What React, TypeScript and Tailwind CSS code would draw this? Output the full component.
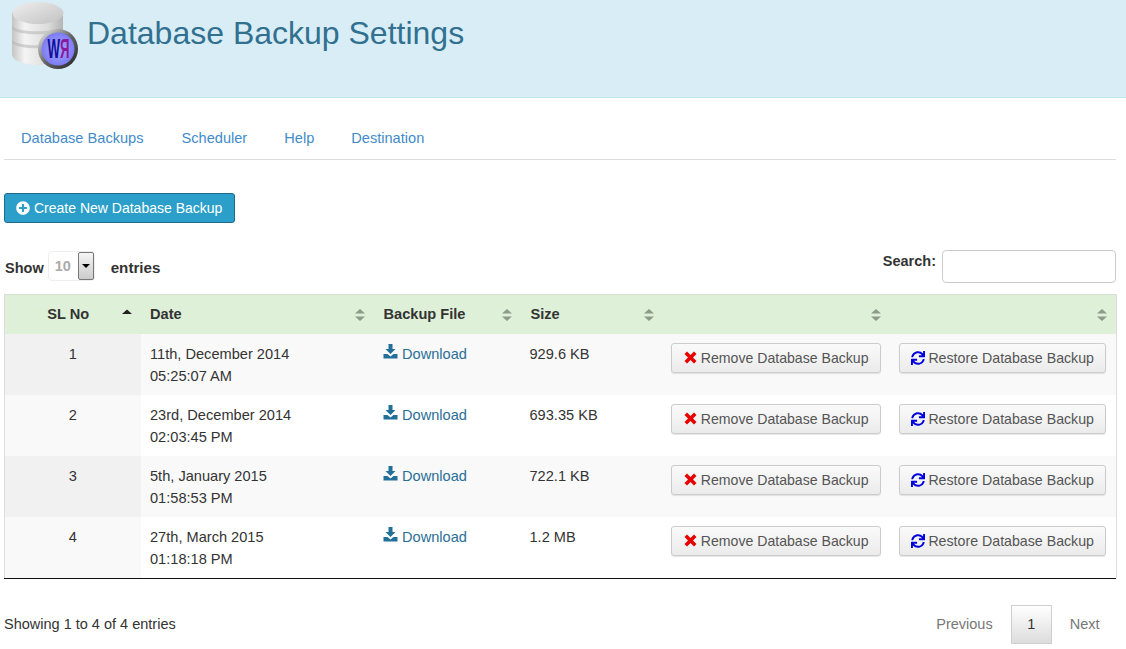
import { FaPlusCircle, FaSync } from "react-icons/fa";

const rows = [
  { no: 1, date: "11th, December 2014", time: "05:25:07 AM", size: "929.6 KB" },
  { no: 2, date: "23rd, December 2014", time: "02:03:45 PM", size: "693.35 KB" },
  { no: 3, date: "5th, January 2015", time: "01:58:53 PM", size: "722.1 KB" },
  { no: 4, date: "27th, March 2015", time: "01:18:18 PM", size: "1.2 MB" },
];

const SortIcon = ({ active }: { active?: boolean }) =>
  active ? (
    <svg width="12" height="12" viewBox="0 0 12 12" className="absolute right-[8px] top-[12px]">
      <path d="M1 7 L6 2.5 L11 7 Z" fill="#222" />
    </svg>
  ) : (
    <svg width="12" height="14" viewBox="0 0 12 14" className="absolute right-[8px] top-[13px]">
      <path d="M1 5.5 L6 1 L11 5.5 Z M1 8.5 L6 13 L11 8.5 Z" fill="#8c9a88" />
    </svg>
  );

const DownloadIcon = () => (
  <svg width="15" height="15" viewBox="0 0 15 15" className="absolute left-0 top-[1px]">
    <path d="M5.5 0 H9.5 V5 H12.5 L7.5 10 L2.5 5 H5.5 Z" fill="#22709a" />
    <path d="M0.5 10 H4.5 L7.5 12.5 L10.5 10 H14.5 V14.5 H0.5 Z" fill="#22709a" />
  </svg>
);

const CrossIcon = () => (
  <svg width="13" height="13" viewBox="0 0 13 13" className="shrink-0">
    <path d="M3 0.5 L6.5 4 L10 0.5 L12.5 3 L9 6.5 L12.5 10 L10 12.5 L6.5 9 L3 12.5 L0.5 10 L4 6.5 L0.5 3 Z" fill="#e80000" />
  </svg>
);

const Logo = () => (
  <svg width="80" height="72" viewBox="0 0 80 72" className="shrink-0">
    <defs>
      <linearGradient id="can" x1="0" x2="1" y1="0" y2="0">
        <stop offset="0" stopColor="#c4c4c4" />
        <stop offset="0.25" stopColor="#f4f4f4" />
        <stop offset="0.7" stopColor="#dcdcdc" />
        <stop offset="1" stopColor="#b5b5b5" />
      </linearGradient>
      <linearGradient id="lid" x1="0" x2="1" y1="0" y2="1">
        <stop offset="0" stopColor="#eeeeee" />
        <stop offset="1" stopColor="#c2c2c2" />
      </linearGradient>
      <linearGradient id="ring" x1="0" x2="1" y1="0" y2="1">
        <stop offset="0" stopColor="#f4f4f4" />
        <stop offset="0.5" stopColor="#666" />
        <stop offset="1" stopColor="#222" />
      </linearGradient>
      <radialGradient id="disc">
        <stop offset="0" stopColor="#a8a8ff" />
        <stop offset="1" stopColor="#7c7cf4" />
      </radialGradient>
    </defs>
    <path d="M12 12 V54 C12 61 25 65 38 65 C51 65 63 61 63 54 V12 Z" fill="url(#can)" />
    <path d="M12 26 C17 33 58 33 63 26 V29 C58 36 17 36 12 29 Z" fill="#b4b4b4" opacity="0.55" />
    <path d="M12 40 C17 47 58 47 63 40 V43 C58 50 17 50 12 43 Z" fill="#b4b4b4" opacity="0.55" />
    <ellipse cx="38" cy="13" rx="25.5" ry="11" fill="url(#lid)" />
    <circle cx="58" cy="49" r="20" fill="url(#ring)" />
    <circle cx="58" cy="49" r="16.5" fill="url(#disc)" />
    <text x="47.5" y="57.5" fontSize="27" fontWeight="700" fontFamily="'Liberation Sans', sans-serif" textLength="22" lengthAdjust="spacingAndGlyphs">
      <tspan fill="#10109a">W</tspan>
      <tspan fill="#8a1a9a">Я</tspan>
    </text>
  </svg>
);

const ActionButton = ({ icon, label, className }: { icon: React.ReactNode; label: string; className: string }) => (
  <button className={`h-[30px] inline-flex items-center pr-[11px] bg-gradient-to-b from-[#fafafa] to-[#ebebeb] border border-[#cccccc] rounded-[3px] text-[#555] whitespace-nowrap shadow-[0_1px_1px_rgba(0,0,0,0.1)] ${className}`}>
    {icon}
    {label}
  </button>
);

export default function App() {
  return (
    <div className="min-h-[649px] bg-white text-[#333] text-[14.6px] leading-[22px] font-['Liberation_Sans',Arial,sans-serif] overflow-hidden">
      <header className="h-[98px] bg-[#d9edf7] border-b border-[#bce8f1] flex items-start">
        <Logo />
        <h1 className="mt-[14px] ml-[7px] text-[#31708f] text-[32px] leading-[38px] font-normal">Database Backup Settings</h1>
      </header>

      <main className="px-1">
        <nav className="w-[1112px] h-[62px] flex items-center gap-[37px] pl-[17px] pt-[18px] border-b border-[#dddddd] text-[#428bca]">
          <a className="mr-px">Database Backups</a>
          <a>Scheduler</a>
          <a>Help</a>
          <a>Destination</a>
        </nav>

        <button className="mt-[33px] h-[30px] w-[231px] flex items-center gap-[4px] pl-[11px] bg-[#2b9fca] border border-[#1b6d8c] rounded-[3px] text-white text-[14px] whitespace-nowrap">
          <FaPlusCircle size={14} />
          Create New Database Backup
        </button>

        <div className="mt-[27px] h-[44px] w-[1112px] flex justify-between items-start">
          <div className="flex items-center h-[36px] font-bold text-[14.5px] pl-px">
            <span>Show</span>
            <div className="ml-1 self-start mt-px w-[47px] h-[30px] border border-[#eeeeee] rounded-[4px] flex items-center pl-[6px] relative text-[#aaa]">
              10
              <span className="absolute right-0 top-0 w-[16px] h-[28px] bg-gradient-to-b from-[#f5f5f5] to-[#cccccc] border border-[#777] rounded-[2px] flex items-center justify-center">
                <span className="w-0 h-0 border-x-[4px] border-x-transparent border-t-[4px] border-t-black" />
              </span>
            </div>
            <span className="ml-4 text-[15.2px]">entries</span>
          </div>
          <div className="flex items-start font-bold text-[14.5px]">
            <span>Search:</span>
            <input className="ml-[6px] w-[174px] h-[33px] border border-[#cccccc] rounded-[4px] bg-white" />
          </div>
        </div>

        <table className="w-[1112px] table-fixed border-collapse border-x border-[#dddddd] border-b-0">
          <colgroup>
            <col className="w-[136px]" />
            <col className="w-[233px]" />
            <col className="w-[147px]" />
            <col className="w-[142px]" />
            <col className="w-[227px]" />
            <col className="w-[227px]" />
          </colgroup>
          <thead>
            <tr className="h-[39px] bg-[#dff0d8] border-t border-[#d6e0d0] font-bold text-left">
              <th className="relative text-center pr-[9px]">SL No<SortIcon active /></th>
              <th className="relative pl-[9.5px]">Date<SortIcon /></th>
              <th className="relative pl-[10px]">Backup File<SortIcon /></th>
              <th className="relative pl-[10px]">Size<SortIcon /></th>
              <th className="relative"><SortIcon /></th>
              <th className="relative"><SortIcon /></th>
            </tr>
          </thead>
          <tbody>
            {rows.map((r, i) => (
              <tr key={r.no} className={`h-[61px] ${i % 2 === 0 ? "bg-[#f9f9f9]" : "bg-white"}`}>
                <td className={`align-top text-center pt-[9px] ${i % 2 === 0 ? "bg-[#f1f1f1]" : "bg-[#f9f9f9]"}`}>{r.no}</td>
                <td className="align-top pt-[9px] pl-[9.5px]">
                  <div>{r.date}</div>
                  <div>{r.time}</div>
                </td>
                <td className="align-top pt-[9px] pl-[9px]">
                  <a className="relative inline-block pl-[19.5px] text-[#2a6f97]">
                    <DownloadIcon />
                    Download
                  </a>
                </td>
                <td className="align-top pt-[9px] pl-[9px]">{r.size}</td>
                <td className="align-top pt-[9px] text-right pr-[9px]">
                  <ActionButton className="pl-3 gap-[4px] text-[14.1px]" icon={<CrossIcon />} label="Remove Database Backup" />
                </td>
                <td className="align-top pt-[9px] text-right pr-[10px]">
                  <ActionButton className="pl-[11px] gap-[3px] text-[14.2px]" icon={<FaSync size={14} color="#0000dd" />} label="Restore Database Backup" />
                </td>
              </tr>
            ))}
          </tbody>
        </table>
        <div className="w-[1112px] h-px bg-[#111]" />

        <div className="mt-[26px] w-[1112px] flex justify-between items-start text-[14.5px]">
          <div className="mt-[8px]">Showing 1 to 4 of 4 entries</div>
          <div className="flex items-center text-[#777] pr-[16.5px]">
            <span className="mr-[18px]">Previous</span>
            <span className="w-[41px] h-[39px] flex items-center justify-center border border-[#cfcfcf] bg-gradient-to-b from-white to-[#dcdcdc] text-[#333]">1</span>
            <span className="ml-[18px]">Next</span>
          </div>
        </div>
      </main>
    </div>
  );
}
